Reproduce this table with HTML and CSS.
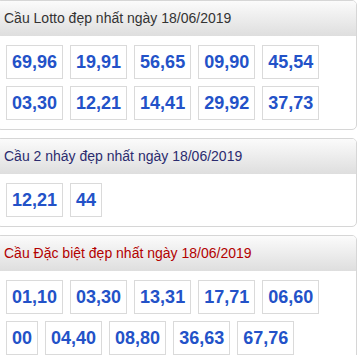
FILE: index.html
```html
<!DOCTYPE html>
<html lang="vi">
<head>
<meta charset="utf-8">
<title>Cầu lô tô</title>
<link rel="stylesheet" href="styles.css">
</head>
<body>
<div class="wrap">
  <div class="panel">
    <div class="head">Cầu Lotto đẹp nhất ngày 18/06/2019</div>
    <div class="body">
      <span class="num">69,96</span><span class="num">19,91</span><span class="num">56,65</span><span class="num">09,90</span><span class="num">45,54</span>
      <span class="num">03,30</span><span class="num">12,21</span><span class="num">14,41</span><span class="num">29,92</span><span class="num">37,73</span>
    </div>
  </div>
  <div class="panel">
    <div class="head head-blue">Cầu 2 nháy đẹp nhất ngày 18/06/2019</div>
    <div class="body">
      <span class="num">12,21</span><span class="num">44</span>
    </div>
  </div>
  <div class="panel">
    <div class="head head-red">Cầu Đặc biệt đẹp nhất ngày 18/06/2019</div>
    <div class="body">
      <span class="num">01,10</span><span class="num">03,30</span><span class="num">13,31</span><span class="num">17,71</span><span class="num">06,60</span>
      <span class="num">00</span><span class="num">04,40</span><span class="num">08,80</span><span class="num">36,63</span><span class="num">67,76</span>
    </div>
  </div>
</div>
</body>
</html>
```
FILE: styles.css
```css
html, body {
  margin: 0;
  padding: 0;
  background: #ffffff;
}
body {
  font-family: "Liberation Sans", Arial, sans-serif;
  overflow: hidden;
}
.wrap {
  margin-left: -4px;
  width: 361px;
  display: flex;
  flex-direction: column;
  gap: 8px;
}
.panel {
  border: 1px solid #d6d6d6;
  border-radius: 5px;
  overflow: hidden;
  background: #fff;
}
.head {
  height: 35px;
  line-height: 35px;
  padding-left: 7px;
  font-size: 14px;
  color: #333333;
  background: linear-gradient(#fbfbfb, #dedede);
  white-space: nowrap;
}
.head-blue {
  color: #2b2b6e;
}
.head-red {
  color: #b30000;
}
.body {
  display: flex;
  flex-wrap: wrap;
  gap: 7px 7px;
  padding: 9px 0 9px 9px;
}
.num {
  display: block;
  height: 32px;
  line-height: 32px;
  padding: 0 5px;
  border: 1px solid #dadada;
  font-size: 18px;
  font-weight: bold;
  color: #2352c8;
}
```
